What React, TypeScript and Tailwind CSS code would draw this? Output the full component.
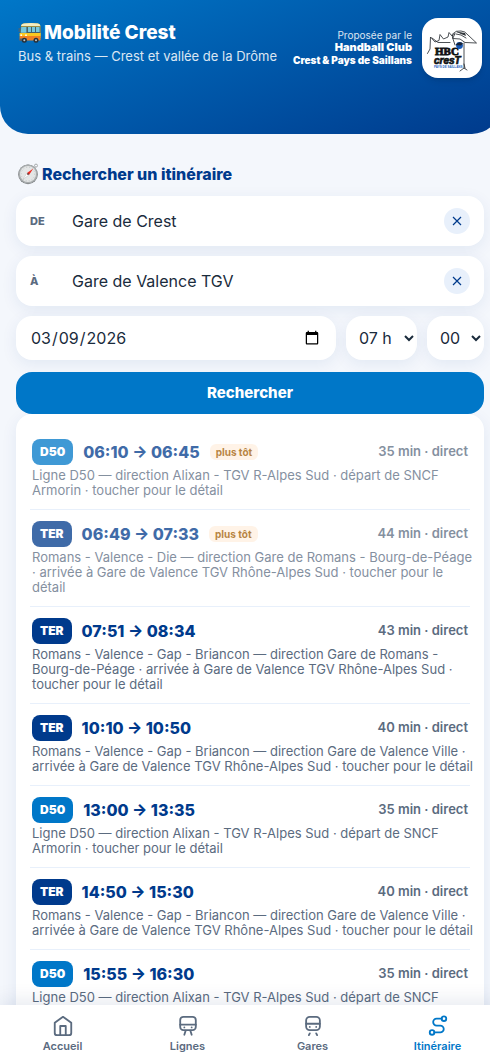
import { useState } from "react";
import type { ReactNode } from "react";

interface Trip {
  line: "D50" | "TER";
  from: string;
  to: string;
  duration: string;
  detail: string;
  early?: boolean;
}

const D50_DETAIL =
  "Ligne D50 — direction Alixan - TGV R-Alpes Sud · départ de SNCF Armorin · toucher pour le détail";
const VILLE_DETAIL =
  "Romans - Valence - Gap - Briancon — direction Gare de Valence Ville · arrivée à Gare de Valence TGV Rhône-Alpes Sud · toucher pour le détail";

const TRIPS: Trip[] = [
  { line: "D50", from: "06:10", to: "06:45", duration: "35 min", detail: D50_DETAIL, early: true },
  {
    line: "TER",
    from: "06:49",
    to: "07:33",
    duration: "44 min",
    detail:
      "Romans - Valence - Die — direction Gare de Romans - Bourg-de-Péage · arrivée à Gare de Valence TGV Rhône-Alpes Sud · toucher pour le détail",
    early: true,
  },
  {
    line: "TER",
    from: "07:51",
    to: "08:34",
    duration: "43 min",
    detail:
      "Romans - Valence - Gap - Briancon — direction Gare de Romans - Bourg-de-Péage · arrivée à Gare de Valence TGV Rhône-Alpes Sud · toucher pour le détail",
  },
  { line: "TER", from: "10:10", to: "10:50", duration: "40 min", detail: VILLE_DETAIL },
  { line: "D50", from: "13:00", to: "13:35", duration: "35 min", detail: D50_DETAIL },
  { line: "TER", from: "14:50", to: "15:30", duration: "40 min", detail: VILLE_DETAIL },
  { line: "D50", from: "15:55", to: "16:30", duration: "35 min", detail: D50_DETAIL },
];

const FIELD = "rounded-2xl bg-white shadow-[0_4px_16px_rgba(0,58,140,0.08)]";

function BusIcon() {
  return (
    <svg viewBox="0 0 24 24" className="size-6 shrink-0" aria-hidden="true">
      <path d="M3 5.5Q3 3 6 2.6Q13 1.8 20 2.6Q22.4 3 22.5 5.5V17H2Z" fill="#f6c01c" />
      <path d="M3 5Q3.4 2.6 6 2.4Q13 1.6 20 2.4Q22 2.8 22.4 5Z" fill="#f4edc4" />
      <path d="M2.6 5.4H22.4V12H2.2Z" fill="#46606b" />
      <path d="M3.2 6H8.4V11.8H2.8ZM10 6h3v5h-3ZM14 6h3v5h-3ZM18 6h3.6v5H18Z" fill="#77c9dd" />
      <path d="M1.6 12H22.6V15H1.6Z" fill="#fcc81f" />
      <path d="M1.6 15H22.6V18.6Q22.6 19.6 21.6 19.6H2.8Q1.6 19.6 1.6 18.4Z" fill="#ef8122" />
      <path d="M1.6 17.4H9V20H2.4Q1.6 20 1.6 19Z" fill="#5a6167" />
      <circle cx="6.3" cy="19.3" r="2.5" fill="#263038" />
      <circle cx="18" cy="19.3" r="2.5" fill="#263038" />
      <circle cx="6.3" cy="19.3" r="1" fill="#c3c8cb" />
      <circle cx="18" cy="19.3" r="1" fill="#c3c8cb" />
      <path d="M1.2 7V11" stroke="#59656d" strokeWidth="1" />
      <circle cx="3.2" cy="14.2" r=".9" fill="#fff" />
      <circle cx="8" cy="14.2" r=".9" fill="#fff" />
    </svg>
  );
}

function CompassIcon() {
  return (
    <svg viewBox="0 0 24 24" className="size-6 shrink-0" aria-hidden="true">
      <circle cx="20" cy="3.6" r="1.5" fill="none" stroke="#a8acad" strokeWidth="1" />
      <circle cx="12" cy="12.4" r="9.8" fill="#74787a" />
      <circle cx="12" cy="12" r="9.5" fill="#a9adae" />
      <circle cx="12" cy="12" r="8" fill="#e4e6e6" />
      <circle cx="12" cy="12" r="6.8" fill="none" stroke="#b3b7b9" strokeWidth=".7" strokeDasharray="1 2" />
      <path d="M17.3 6.4L13 13L11 11Z" fill="#ef2b22" />
      <path d="M6.7 17.6L11 11L13 13Z" fill="#fff" stroke="#a8adb0" strokeWidth=".4" />
      <circle cx="12" cy="12" r=".9" fill="#6d3a35" />
    </svg>
  );
}

function ClubLogo() {
  return (
    <svg
      viewBox="0 0 60 60"
      className="size-15 shrink-0 rounded-2xl bg-white shadow-md"
      role="img"
      aria-label="HBC Crest"
    >
      <g fill="none" stroke="#20242a" strokeWidth=".8" strokeLinecap="round" strokeLinejoin="round">
        <path d="M5.500 35.500L8 31L8.500 19L13 24L17 22.500L18 16.500L21.500 21L26 19L27 14.500L30 18L33 15.500L31 20" />
        <path d="M10 20L16 24.500L28 24.500" />
        <path d="M30.500 16Q34 12 39 13Q43 13 46 17L54.500 25L43 24.500L38 21L31 20.500Z" />
        <path d="M34 16L39 17L44 20M35 14L42 16M31 21L33 27M42 25V50M38 53L42 50L45 52M42 46L43 50" />
      </g>
      <path d="M36 14L43 15L44 18L39 16Z" fill="#33383d" />
      <text
        x="13"
        y="37"
        fill="#101214"
        stroke="#101214"
        strokeWidth=".8"
        className="font-['Liberation_Serif',serif] text-[11px] font-bold"
      >
        HBC
      </text>
      <circle cx="37.500" cy="27.500" r="3.400" fill="#1557b5" />
      <path d="M33.500 27Q37 22.500 41 25.500L39 27.500Z" fill="#182335" />
      <text
        x="12"
        y="46"
        fill="#101214"
        stroke="#101214"
        strokeWidth=".7"
        className="font-['Liberation_Sans',sans-serif] text-[10px] font-bold italic"
      >
        cresT
      </text>
      <text x="12" y="50" fill="#1f62bd" className="font-['Liberation_Sans',sans-serif] text-[3px] font-bold">
        PAYS DE SAILLANS
      </text>
    </svg>
  );
}

function StopField({ id, label, initial }: { id: string; label: string; initial: string }) {
  const [value, setValue] = useState(initial);
  return (
    <div className={`${FIELD} flex h-[50px] items-center px-3.5`}>
      <label htmlFor={id} className="w-[42px] shrink-0 text-[11px] font-extrabold text-[#5b6b7f]">
        {label}
      </label>
      <input
        id={id}
        value={value}
        onChange={(e) => setValue(e.target.value)}
        className="min-w-0 flex-1 bg-transparent text-base text-[#1a2b3c] outline-none"
      />
      <button
        type="button"
        aria-label="Effacer"
        onClick={() => setValue("")}
        className="flex size-[26px] items-center justify-center rounded-full bg-[#e8f0fb] text-[#003a8c]"
      >
        <svg viewBox="0 0 10 10" className="size-2.5" fill="none" stroke="currentColor" strokeWidth="1.2">
          <path d="M1 1L9 9M9 1L1 9" />
        </svg>
      </button>
    </div>
  );
}

function TripRow({ trip }: { trip: Trip }) {
  return (
    <li className="border-b border-[#e8f0fb]">
      <button type="button" className={`block w-full px-0.5 py-[11px] text-left ${trip.early ? "opacity-75" : ""}`}>
        <span className="flex items-center">
          <span
            className={`rounded-lg px-2 text-xs leading-[26px] font-black text-white ${
              trip.line === "D50" ? "bg-[#0077c8]" : "bg-[#003a8c]"
            }`}
          >
            {trip.line}
          </span>
          <span className="ml-2.5 text-base leading-[26px] font-extrabold text-[#003a8c]">
            {trip.from} → {trip.to}
          </span>
          {trip.early && (
            <span className="ml-2.5 rounded-md bg-[#fff0e0] px-1.5 text-[10px] leading-4 font-bold text-[#a15c00]">
              plus tôt
            </span>
          )}
          <span className="ml-auto text-[13px] font-semibold text-[#5b6b7f]">{trip.duration} · direct</span>
        </span>
        <span className="mt-[3px] -mr-2 block text-[13px] leading-[15px] text-[#5b6b7f]">{trip.detail}</span>
      </button>
    </li>
  );
}

function NavItem({ label, active, children }: { label: string; active?: boolean; children: ReactNode }) {
  return (
    <a
      href="#"
      aria-current={active ? "page" : undefined}
      className={`flex flex-1 flex-col items-center gap-0.5 pt-2.5 pb-1.5 text-[11px] leading-[15px] font-semibold ${
        active ? "text-[#0077c8]" : "text-[#5b6b7f]"
      }`}
    >
      <svg
        viewBox="0 0 24 24"
        className="size-[22px]"
        fill="none"
        stroke="currentColor"
        strokeWidth="2"
        strokeLinecap="round"
        strokeLinejoin="round"
        aria-hidden="true"
      >
        {children}
      </svg>
      {label}
    </a>
  );
}

export default function App() {
  return (
    <div className="h-screen overflow-hidden bg-[#f4f7fc] font-['Inter',sans-serif] text-[#1a2b3c]">
      <div className="-mr-2.5 flex h-full flex-col">
        <div className="min-h-0 flex-1 overflow-x-hidden overflow-y-auto [scrollbar-width:none]">
          <header className="flex items-start justify-between rounded-b-[28px] bg-[linear-gradient(160deg,#0077c8,#003a8c)] px-[18px] pt-[18px] pb-14 text-white">
            <div className="pt-[3px]">
              <h1 className="flex items-center gap-0.5 text-[19px] leading-6 font-extrabold">
                <BusIcon />
                Mobilité Crest
              </h1>
              <p className="mt-[3px] text-[13px] leading-4 opacity-85">Bus &amp; trains — Crest et vallée de la Drôme</p>
            </div>
            <div className="flex items-center gap-2.5">
              <p className="text-right text-[10px] leading-[14px] font-black">
                <span className="block leading-3 font-normal opacity-85">Proposée par le</span>
                <span className="block text-[11px] leading-3">Handball Club</span>
                Crest &amp; Pays de Saillans
              </p>
              <ClubLogo />
            </div>
          </header>

          <main className="px-4 pt-7">
            <h2 className="flex items-center gap-0.5 text-base leading-6 font-extrabold text-[#003a8c]">
              <CompassIcon />
              Rechercher un itinéraire
            </h2>
            <form className="mt-2.5 flex flex-col gap-2.5" onSubmit={(e) => e.preventDefault()}>
              <StopField id="from" label="DE" initial="Gare de Crest" />
              <StopField id="to" label="À" initial="Gare de Valence TGV" />
              <div className="flex h-11 gap-2.5">
                <input
                  type="date"
                  aria-label="Date"
                  defaultValue="2026-03-09"
                  className={`${FIELD} min-w-0 flex-1 px-3.5 text-base`}
                />
                <select aria-label="Heure" defaultValue="07" className={`${FIELD} w-[71px] pl-[9px] text-base`}>
                  <option value="07">07 h</option>
                  <option value="08">08 h</option>
                </select>
                <select aria-label="Minutes" defaultValue="00" className={`${FIELD} w-[57px] pl-[9px] text-base`}>
                  <option>00</option>
                  <option>30</option>
                </select>
              </div>
              <button
                type="submit"
                className="mt-0.5 h-[42px] rounded-2xl bg-[#0077c8] text-[15px] font-extrabold text-white"
              >
                Rechercher
              </button>
            </form>
            <ul className={`${FIELD} p-3.5`}>
              {TRIPS.map((trip) => (
                <TripRow key={trip.from} trip={trip} />
              ))}
            </ul>
          </main>
        </div>

        <nav className="relative z-10 flex bg-white shadow-[0_-4px_20px_rgba(0,40,100,0.1)]">
          <NavItem label="Accueil">
            <path d="M3 8.500L12 2L21 8.500V19.500Q21 22 18.500 22H5.500Q3 22 3 19.500Z" />
            <path d="M9 21.500V12H15V21.500" />
          </NavItem>
          <NavItem label="Lignes">
            <rect x="3.500" y="2" width="17" height="14.500" rx="3.500" />
            <path d="M3.500 10.500H20.500M9.500 17L8 21.500M14.500 17L16 21.500M8 13.500H8.010M16 13.500H16.010" />
          </NavItem>
          <NavItem label="Gares">
            <rect x="4.500" y="2" width="15" height="14.500" rx="4" />
            <path d="M4.500 9.500H19.500M8.500 13H8.510M15.500 13H15.510M8.500 20L7.500 22M15.500 20L16.500 22" />
          </NavItem>
          <NavItem label="Itinéraire" active>
            <circle cx="5.500" cy="19" r="2.500" />
            <circle cx="18.500" cy="4" r="2.500" />
            <path d="M16 4H10.500A3.700 3.700 0 0 0 10.500 11.500H14.500A3.700 3.700 0 0 1 14.500 19H8" />
          </NavItem>
        </nav>
      </div>
    </div>
  );
}
